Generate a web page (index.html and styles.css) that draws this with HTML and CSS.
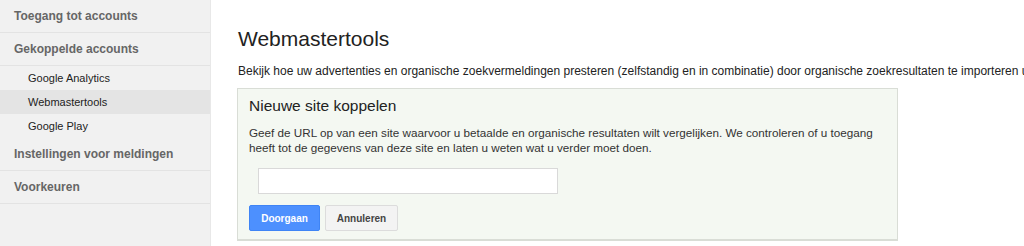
FILE: index.html
```html
<!DOCTYPE html>
<html lang="nl">
<head>
    <meta charset="UTF-8">
    <title>Webmastertools</title>
    <link rel="stylesheet" href="styles.css">
</head>
<body>

<nav class="sidebar">
    <div class="nav-item">Toegang tot accounts</div>
    <div class="nav-group">
        <div class="nav-item">Gekoppelde accounts</div>
        <div class="sub-item">Google Analytics</div>
        <div class="sub-item active">Webmastertools</div>
        <div class="sub-item">Google Play</div>
    </div>
    <div class="nav-item">Instellingen voor meldingen</div>
    <div class="nav-item">Voorkeuren</div>
</nav>

<main class="content">
    <h1>Webmastertools</h1>
    <p class="intro">Bekijk hoe uw advertenties en organische zoekvermeldingen presteren (zelfstandig en in combinatie) door organische zoekresultaten te importeren uit Webmastertools.</p>

    <div class="panel">
        <h2>Nieuwe site koppelen</h2>
        <p>Geef de URL op van een site waarvoor u betaalde en organische resultaten wilt vergelijken. We controleren of u toegang heeft tot de gegevens van deze site en laten u weten wat u verder moet doen.</p>
        <input type="text" class="url">
        <div class="buttons">
            <button class="primary">Doorgaan</button>
            <button class="cancel">Annuleren</button>
        </div>
    </div>
</main>

</body>
</html>
```

FILE: styles.css
```css
body {
    margin: 0;
    font-family: "Liberation Sans", Arial, sans-serif;
    color: #222;
    display: flex;
    height: 246px;
    overflow: hidden;
    background: #fff;
}

.sidebar {
    width: 210px;
    flex-shrink: 0;
    background: #f1f1f1;
    border-right: 1px solid #e8e8e8;
}
.nav-item {
    height: 32px;
    line-height: 32px;
    padding-left: 14px;
    font-size: 12px;
    font-weight: bold;
    color: #666;
    border-bottom: 1px solid #e3e3e3;
}
.sub-item {
    height: 24px;
    line-height: 24px;
    padding-left: 28px;
    font-size: 11px;
    color: #222;
}
.sub-item.active { background: #e4e4e4; }

.content {
    padding-left: 26px;
    white-space: nowrap;
    min-width: 0;
    overflow: hidden;
}
.content h1 {
    font-size: 21px;
    font-weight: normal;
    margin: 27px 0 0 1px;
    line-height: 24px;
}
.intro {
    font-size: 12px;
    margin: 13px 0 0 1px;
    line-height: 15px;
    color: #222;
}

.panel {
    width: 637px;
    margin-top: 9px;
    padding: 7px 11px 8px;
    background: #f4f8f2;
    border: 1px solid #d9ddd6;
    border-bottom-width: 2px;
    white-space: normal;
}
.panel h2 {
    font-size: 15.5px;
    font-weight: normal;
    margin: 0;
    line-height: 20px;
}
.panel p {
    font-size: 11.7px;
    line-height: 15px;
    margin: 9px 0 0;
    color: #333;
    width: 640px;
}
.url {
    display: block;
    width: 300px;
    height: 26px;
    box-sizing: border-box;
    margin: 13px 0 0 9px;
    border: 1px solid #d9d9d9;
    background: #fff;
}
.buttons {
    display: flex;
    gap: 5px;
    margin-top: 11px;
}
.buttons button {
    height: 26px;
    padding: 0;
    font-family: inherit;
    font-size: 10px;
    font-weight: bold;
    color: #444;
    background: #f3f3f3;
    border: 1px solid #dcdcdc;
    border-radius: 2px;
}
.buttons .primary {
    width: 71px;
    background: #4d90fe;
    border-color: #3f84f5;
    color: #fff;
}
.buttons .cancel { width: 73px; }
```
